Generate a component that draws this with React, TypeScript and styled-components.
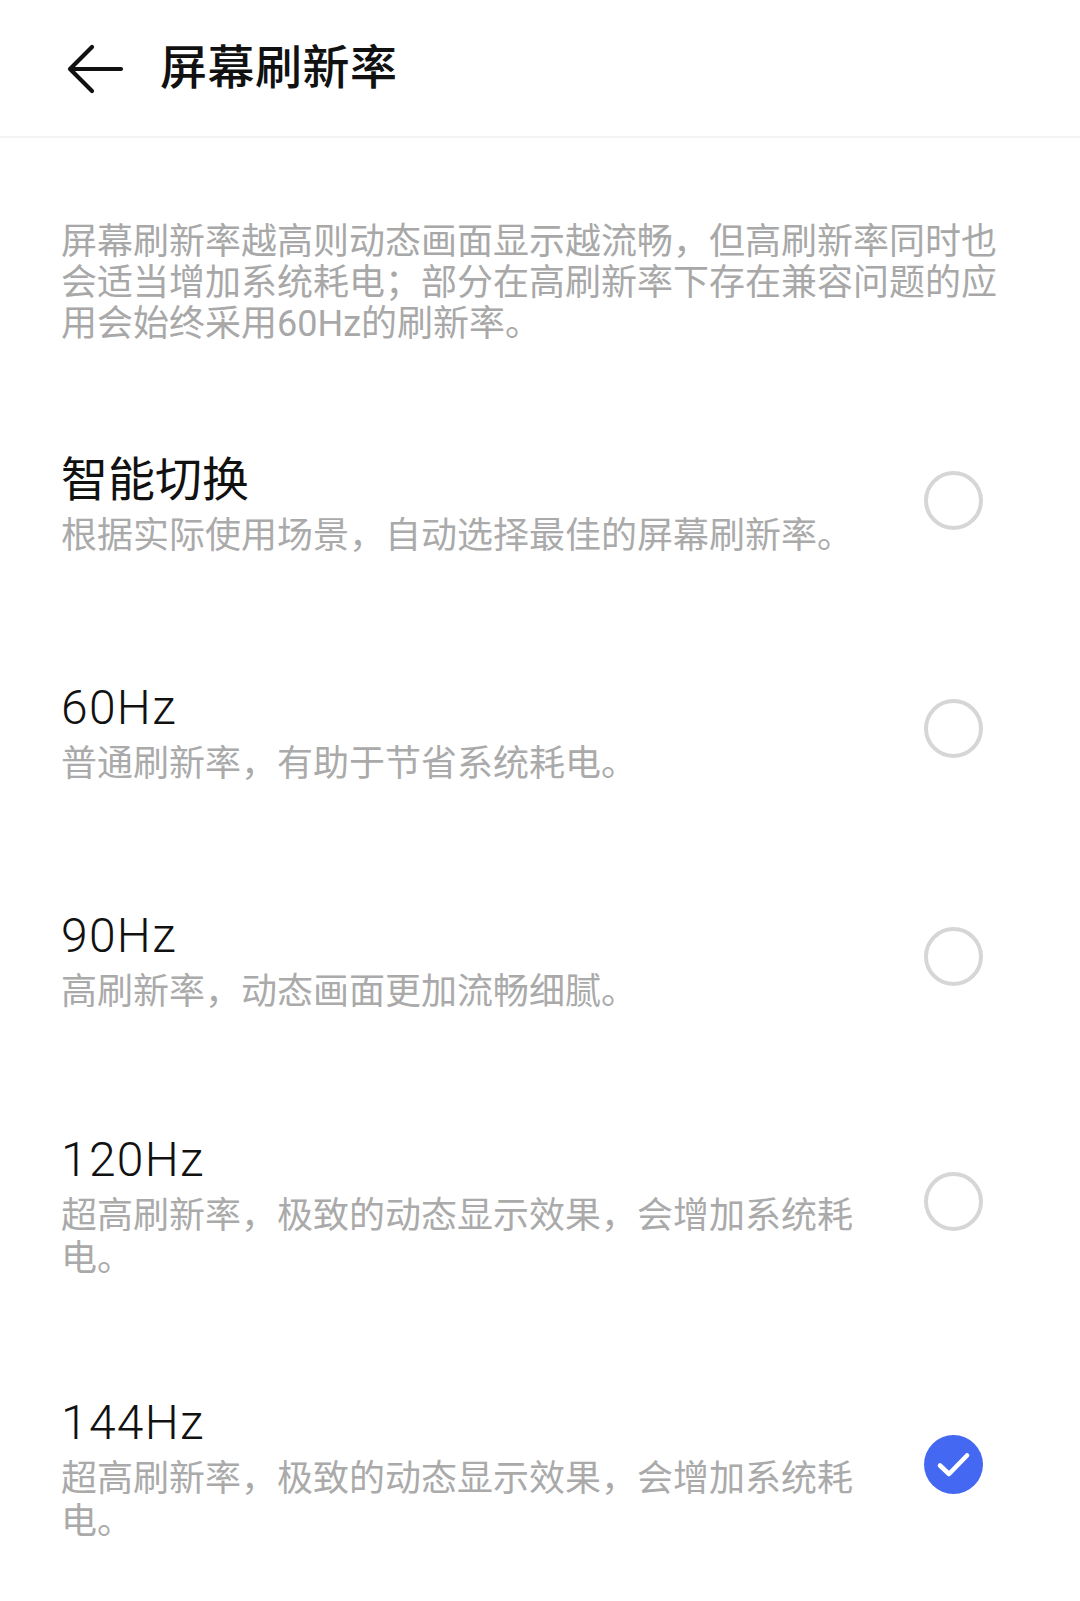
import React from "react";
import styled, { createGlobalStyle } from "styled-components";

const GlobalStyle = createGlobalStyle`
  html, body {
    margin: 0;
    padding: 0;
    background: #ffffff;
  }
  body {
    font-family: Roboto, "Noto Sans CJK SC", sans-serif;
    -webkit-font-smoothing: antialiased;
  }
`;

const Page = styled.div`
  width: 1080px;
  min-height: 1601px;
  background: #ffffff;
  display: flex;
  flex-direction: column;
`;

const Header = styled.header`
  height: 136px;
  display: flex;
  align-items: center;
  padding-left: 66px;
  gap: 36px;
  border-bottom: 2px solid #f4f4f4;
  box-sizing: content-box;
`;

const BackButton = styled.button`
  border: none;
  background: none;
  padding: 0;
  width: 58px;
  height: 50px;
  display: flex;
  align-items: center;
  justify-content: center;
  cursor: pointer;
  margin-top: 2px;
`;

const Title = styled.h1`
  margin: 0;
  font-size: 47px;
  font-weight: 500;
  color: #111111;
  line-height: 60px;
  letter-spacing: 0.5px;
`;

const Description = styled.p`
  margin: 0;
  padding: 84px 61px 42px 61px;
  font-size: 36px;
  line-height: 41px;
  color: #a8a8a8;
`;

const List = styled.div`
  display: flex;
  flex-direction: column;
`;

const Row = styled.div`
  display: flex;
  align-items: center;
  box-sizing: border-box;
  min-height: 228px;
  padding: 53px 97px 53px 61px;
  gap: 53px;
`;

const TextCol = styled.div`
  flex: 0 0 810px;
  display: flex;
  flex-direction: column;
  padding-top: 6px;
`;

const OptionTitle = styled.div<{ $latin?: boolean }>`
  font-size: ${(p) => (p.$latin ? "48px" : "47px")};
  line-height: 60px;
  color: #111111;
  font-weight: ${(p) => (p.$latin ? 300 : 400)};
  letter-spacing: ${(p) => (p.$latin ? "1.3px" : "0")};
`;

const OptionSub = styled.div`
  margin-top: 5px;
  font-size: 36px;
  line-height: 43px;
  color: #aaaaaa;
`;

const Radio = styled.div<{ $checked?: boolean }>`
  flex: 0 0 59px;
  width: 59px;
  height: 59px;
  margin-bottom: 2px;
  border-radius: 50%;
  box-sizing: border-box;
  border: ${(p) => (p.$checked ? "none" : "4px solid #d6d6d6")};
  background: ${(p) => (p.$checked ? "#4468f1" : "transparent")};
  display: flex;
  align-items: center;
  justify-content: center;
`;

const options = [
  { title: "智能切换", sub: "根据实际使用场景，自动选择最佳的屏幕刷新率。" },
  { title: "60Hz", sub: "普通刷新率，有助于节省系统耗电。", latin: true },
  { title: "90Hz", sub: "高刷新率，动态画面更加流畅细腻。", latin: true },
  { title: "120Hz", sub: "超高刷新率，极致的动态显示效果，会增加系统耗电。", latin: true },
  { title: "144Hz", sub: "超高刷新率，极致的动态显示效果，会增加系统耗电。", latin: true, checked: true },
];

const BackArrow = () => (
  <svg width="58" height="50" viewBox="0 0 58 50" fill="none">
    <path
      d="M55 25 H4 M26 3 L4 25 L26 47"
      stroke="#111111"
      strokeWidth="4.2"
      strokeLinecap="round"
      strokeLinejoin="round"
    />
  </svg>
);

const Check = () => (
  <svg width="59" height="59" viewBox="0 0 59 59" fill="none">
    <path
      d="M16 30.5 L25 39 L43 20.5"
      stroke="#ffffff"
      strokeWidth="4.6"
      strokeLinecap="round"
      strokeLinejoin="round"
    />
  </svg>
);

export default function App() {
  return (
    <>
      <GlobalStyle />
      <Page>
        <Header>
          <BackButton aria-label="返回">
            <BackArrow />
          </BackButton>
          <Title>屏幕刷新率</Title>
        </Header>
        <Description>
          屏幕刷新率越高则动态画面显示越流畅，但高刷新率同时也会适当增加系统耗电；部分在高刷新率下存在兼容问题的应用会始终采用60Hz的刷新率。
        </Description>
        <List>
          {options.map((o) => (
            <Row key={o.title}>
              <TextCol>
                <OptionTitle $latin={o.latin}>{o.title}</OptionTitle>
                <OptionSub>{o.sub}</OptionSub>
              </TextCol>
              <Radio $checked={o.checked}>{o.checked && <Check />}</Radio>
            </Row>
          ))}
        </List>
      </Page>
    </>
  );
}
